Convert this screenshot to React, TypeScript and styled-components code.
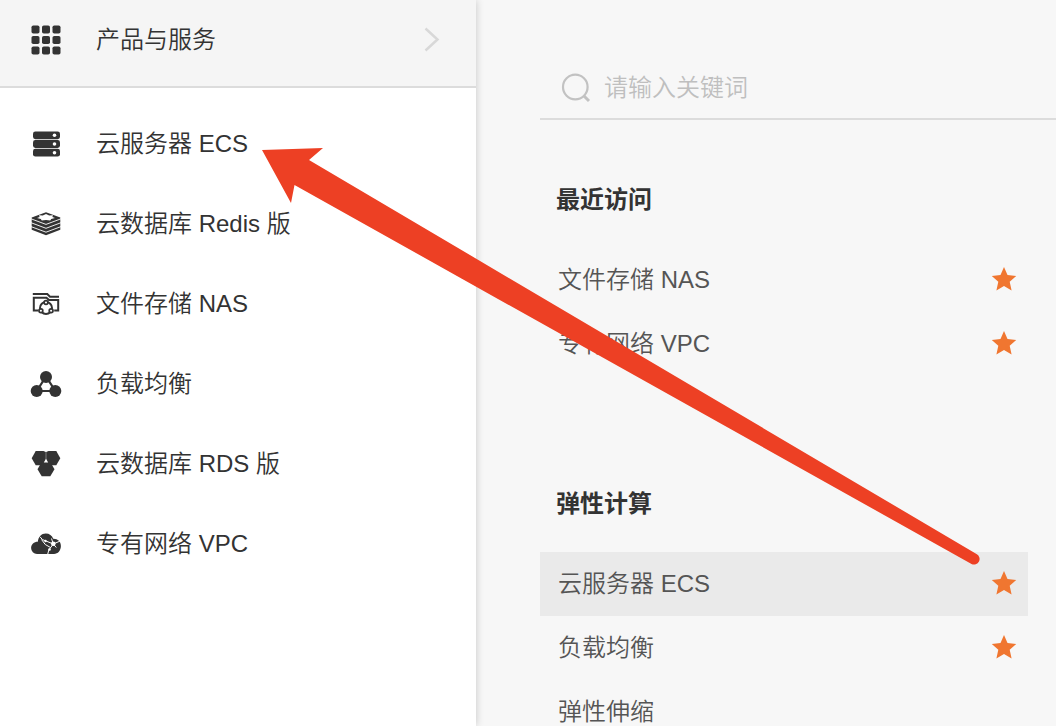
import React from 'react';
import styled, { createGlobalStyle } from 'styled-components';

const GlobalStyle = createGlobalStyle`
  * { box-sizing: border-box; }
  body {
    margin: 0;
    background: #f7f7f7;
    color: #333;
    font: 350 24px/32px "Liberation Sans", "Noto Sans CJK SC", sans-serif;
  }
`;

const Page = styled.div`
  position: relative;
  display: flex;
  height: 100vh;
  overflow: hidden;
`;

const Sidebar = styled.nav`
  flex: 0 0 476px;
  background: #fff;
  box-shadow: 0 0 8px rgba(0, 0, 0, 0.2);
`;

const ProductsButton = styled.button`
  display: flex;
  align-items: center;
  width: 100%;
  height: 88px;
  padding: 0 32px 6px 30px;
  border: 0;
  border-bottom: 2px solid #dcdcdc;
  background: #f5f5f5;
  color: inherit;
  font: inherit;
  text-align: left;
`;

const Label = styled.span`
  flex: 1;
  margin-left: 34px;
`;

const ProductList = styled.ul`
  margin: 0;
  padding: 16px 0;
  list-style: none;
`;

const ProductLink = styled.a`
  display: flex;
  align-items: center;
  height: 80px;
  padding: 0 30px;
  color: inherit;
  text-decoration: none;
`;

const Icon = styled.svg`
  flex: none;
  display: block;
`;

const Main = styled.main`
  flex: 1;
  min-width: 0;
  padding: 56px 0 0 64px;
`;

const SearchBar = styled.label`
  display: flex;
  align-items: center;
  gap: 12px;
  height: 64px;
  padding: 2px 0 0 20px;
  border-bottom: 2px solid #dcdcdc;
`;

const SearchInput = styled.input`
  flex: 1;
  min-width: 0;
  padding: 0;
  border: 0;
  outline: 0;
  background: transparent;
  color: #333;
  font: inherit;
  &::placeholder { color: #bfbfbf; }
`;

const Section = styled.section`
  padding: 64px 28px 64px 0;
  & + & { padding-top: 48px; }
`;

const SectionTitle = styled.h2`
  margin: 0 0 32px;
  padding-left: 16px;
  font-size: 24px;
  font-weight: 700;
  line-height: 32px;
`;

const ServiceList = styled.ul`
  margin: 0;
  padding: 0;
  list-style: none;
`;

const ServiceRow = styled.li<{ $active?: boolean }>`
  display: flex;
  align-items: center;
  justify-content: space-between;
  height: 64px;
  padding: 0 11px 0 18px;
  background: ${(p) => (p.$active ? '#eaeaea' : 'transparent')};
`;

const ServiceLink = styled.a`
  color: #555;
  text-decoration: none;
`;

const StarButton = styled.button`
  padding: 0;
  border: 0;
  background: none;
`;

const Arrow = styled.svg`
  position: absolute;
  top: 0;
  left: 0;
  pointer-events: none;
`;

const GridIcon = () => (
  <Icon width="32" height="32" viewBox="0 0 32 32" fill="#333">
    {[1.5, 12, 22.5].map((y) =>
      [1.5, 12, 22.5].map((x) => <rect key={`${x}-${y}`} x={x} y={y} width="8" height="8" rx="1.8" />)
    )}
  </Icon>
);

const ServerIcon = () => (
  <Icon width="32" height="32" viewBox="0 0 32 32">
    {[3.4, 12.1, 20.8].map((y) => (
      <g key={y}>
        <rect x="3" y={y} width="27" height="7.8" rx="2.4" fill="#333" />
        <circle cx="24.5" cy={y + 3.9} r="1.8" fill="#fff" />
      </g>
    ))}
  </Icon>
);

const RedisIcon = () => (
  <Icon width="32" height="32" viewBox="0 0 32 32">
    <path d="M16 4.200 30.300 9.400v12.300L16 27.200 1.700 21.700V9.400z" fill="#333" />
    <path
      d="m1 10.800 15 5.600 15-5.600M1 14.700l15 5.600 15-5.600M1 18.600l15 5.600 15-5.600"
      fill="none"
      stroke="#fff"
      strokeWidth="0.900"
    />
    <path d="m9 7.300 3.800.3L16 6l3.200 1.600 3.800-.3-.6 1.700 2.600 1.100-3.800.8-1 1.500-4.200-.4-4.200.4-1-1.500L7 10.100 9.600 9z" fill="#fff" />
  </Icon>
);

const FolderIcon = () => (
  <Icon width="32" height="32" viewBox="0 0 32 32" fill="none" stroke="#333" strokeWidth="2">
    <path d="M2.800 6h14.500l2.700 2.800h9" />
    <path d="M8.500 22.500H3.800V9.800H16.500l2.500 2.200h9.200v10.500h-4" />
    <circle cx="16" cy="20" r="6" />
    <g fill="#fff" strokeWidth="1.700">
      <circle cx="16" cy="14.500" r="1.900" />
      <circle cx="10.900" cy="22.800" r="1.900" />
      <circle cx="21.100" cy="22.800" r="1.900" />
    </g>
  </Icon>
);

const BalanceIcon = () => (
  <Icon width="32" height="32" viewBox="0 0 32 32" fill="#333">
    <path d="M16 8.500 6.800 23h18.500z" fill="none" stroke="#333" strokeWidth="2.200" />
    <circle cx="16" cy="9" r="6" />
    <circle cx="6.700" cy="23" r="6" />
    <circle cx="25.300" cy="23" r="6" />
  </Icon>
);

const HexIcon = () => (
  <Icon width="32" height="32" viewBox="0 0 32 32" fill="#333">
    <path d="M5.700 3h7.800l2.300 1v10L13.500 17.300H5.700L1.700 10.300z" />
    <path d="M26.300 3h-7.800l-2.300 1v10l2.300 3.300h7.800l4-7z" />
    <path d="M11.700 14h8.600l4.200 7.200-4.200 7h-8.600l-4.200-7z" />
    <path d="m16 10.800 2.200 3.800h-4.400z" fill="#fff" />
  </Icon>
);

const CloudIcon = () => (
  <Icon width="32" height="32" viewBox="0 0 32 32">
    <path
      d="M7 26a6 6 0 0 1-5.900-6c0-3.700 2.900-6.300 6.700-6.300C8.500 8.500 11.500 5.400 15.700 5.400c3.800 0 6.300 2 7.500 5.300 4.500-.2 7.700 2.900 7.700 7.300s-3 8-6.900 8z"
      fill="#333"
    />
    <g stroke="#fff" strokeWidth="1" fill="none">
      <path d="M10 8.800q2 3.500 6 4.200l7.300 3 8-3.500M23.300 16l-4.500 6-1.300 5M23.300 16l-1.800-5.500M23.300 16l3 3.500M11.500 11.500q3 6 9 8" />
    </g>
    <g fill="#fff">
      <circle cx="15.500" cy="13" r="1.200" />
      <circle cx="23.300" cy="15.800" r="2.300" />
      <circle cx="19.500" cy="21.500" r="1.300" />
    </g>
  </Icon>
);

const ChevronIcon = () => (
  <Icon width="24" height="32" viewBox="0 0 24 32" fill="none" stroke="#d8d8d8" strokeWidth="2.500">
    <path d="m5.500 4.500 12 11-12 11" />
  </Icon>
);

const SearchIcon = () => (
  <Icon width="32" height="32" viewBox="0 0 32 32" fill="none" stroke="#c2c2c2" strokeWidth="2.200">
    <circle cx="15.300" cy="15" r="12.300" />
    <path d="m23.500 23.500 5.500 5.500" strokeWidth="3" />
  </Icon>
);

const StarIcon = () => (
  <Icon width="26" height="26" viewBox="0 1 26 26" fill="#f07630">
    <path d="m13 1 3.500 8.100 8.700.8-6.500 5.900 1.900 8.600L13 20l-7.600 4.400 1.900-8.600L.8 9.900l8.700-.8z" />
  </Icon>
);

const products = [
  { name: '云服务器 ECS', Glyph: ServerIcon },
  { name: '云数据库 Redis 版', Glyph: RedisIcon },
  { name: '文件存储 NAS', Glyph: FolderIcon },
  { name: '负载均衡', Glyph: BalanceIcon },
  { name: '云数据库 RDS 版', Glyph: HexIcon },
  { name: '专有网络 VPC', Glyph: CloudIcon },
];

const sections = [
  {
    title: '最近访问',
    items: [
      { name: '文件存储 NAS', starred: true },
      { name: '专有网络 VPC', starred: true },
    ],
  },
  {
    title: '弹性计算',
    items: [
      { name: '云服务器 ECS', starred: true, active: true },
      { name: '负载均衡', starred: true },
      { name: '弹性伸缩' },
    ],
  },
] as { title: string; items: { name: string; starred?: boolean; active?: boolean }[] }[];

export default function App() {
  return (
    <Page>
      <GlobalStyle />
      <Sidebar>
        <ProductsButton type="button">
          <GridIcon />
          <Label>产品与服务</Label>
          <ChevronIcon />
        </ProductsButton>
        <ProductList>
          {products.map(({ name, Glyph }) => (
            <li key={name}>
              <ProductLink href="#">
                <Glyph />
                <Label>{name}</Label>
              </ProductLink>
            </li>
          ))}
        </ProductList>
      </Sidebar>
      <Main>
        <SearchBar>
          <SearchIcon />
          <SearchInput type="text" placeholder="请输入关键词" />
        </SearchBar>
        {sections.map((section) => (
          <Section key={section.title}>
            <SectionTitle>{section.title}</SectionTitle>
            <ServiceList>
              {section.items.map((item) => (
                <ServiceRow key={item.name} $active={item.active}>
                  <ServiceLink href="#">{item.name}</ServiceLink>
                  {item.starred && (
                    <StarButton type="button" aria-label={item.name}>
                      <StarIcon />
                    </StarButton>
                  )}
                </ServiceRow>
              ))}
            </ServiceList>
          </Section>
        ))}
      </Main>
      <Arrow width="1000" height="600" viewBox="0 0 1000 600" fill="#ed4024">
        <path d="M262 150 323 148 309 160 976.500 554A5.500 5.500 0 0 1 971.500 564L294.500 185 291 203z" />
      </Arrow>
    </Page>
  );
}
